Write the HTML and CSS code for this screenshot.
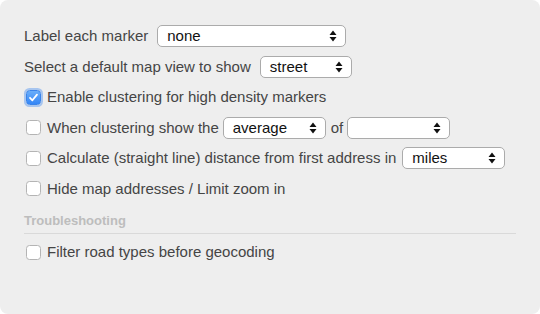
FILE: index.html
```html
<!DOCTYPE html>
<html>
<head>
<meta charset="utf-8">
<link rel="stylesheet" href="styles.css">
</head>
<body>
<div class="panel">
  <div class="row">
    <span class="label">Label each marker</span>
    <div class="select w189 ml9"><span>none</span><svg class="arr" width="8" height="12" viewBox="0 0 8 12"><path d="M4 0.5L7.5 5H0.5Z M4 11.5L7.5 7H0.5Z" fill="#111"/></svg></div>
  </div>
  <div class="row">
    <span class="label">Select a default map view to show</span>
    <div class="select w92 ml9"><span>street</span><svg class="arr" width="8" height="12" viewBox="0 0 8 12"><path d="M4 0.5L7.5 5H0.5Z M4 11.5L7.5 7H0.5Z" fill="#111"/></svg></div>
  </div>
  <div class="row">
    <span class="check on"><svg width="11" height="11" viewBox="0 0 11 11"><path d="M2 5.8L4.4 8.3L9 2.6" fill="none" stroke="#fff" stroke-width="1.8" stroke-linecap="round" stroke-linejoin="round"/></svg></span>
    <span class="label">Enable clustering for high density markers</span>
  </div>
  <div class="row">
    <span class="check"></span>
    <span class="label">When clustering show the</span>
    <div class="select w103 ml4"><span>average</span><svg class="arr" width="8" height="12" viewBox="0 0 8 12"><path d="M4 0.5L7.5 5H0.5Z M4 11.5L7.5 7H0.5Z" fill="#111"/></svg></div>
    <span class="label ml5">of</span>
    <div class="select w103 ml4"><span></span><svg class="arr" width="8" height="12" viewBox="0 0 8 12"><path d="M4 0.5L7.5 5H0.5Z M4 11.5L7.5 7H0.5Z" fill="#111"/></svg></div>
  </div>
  <div class="row">
    <span class="check"></span>
    <span class="label">Calculate (straight line) distance from first address in</span>
    <div class="select w103 ml6"><span>miles</span><svg class="arr" width="8" height="12" viewBox="0 0 8 12"><path d="M4 0.5L7.5 5H0.5Z M4 11.5L7.5 7H0.5Z" fill="#111"/></svg></div>
  </div>
  <div class="row">
    <span class="check"></span>
    <span class="label">Hide map addresses / Limit zoom in</span>
  </div>
  <div class="heading">Troubleshooting</div>
  <div class="row last">
    <span class="check"></span>
    <span class="label">Filter road types before geocoding</span>
  </div>
</div>
</body>
</html>
```
FILE: styles.css
```css
html, body {
  margin: 0;
  padding: 0;
  background: #ffffff;
}
.panel {
  width: 540px;
  height: 314px;
  box-sizing: border-box;
  background: #eeeeee;
  border-radius: 8px;
  padding: 20.7px 24px 0 24px;
  font-family: "Liberation Sans", Arial, sans-serif;
  font-size: 15px;
  color: #454545;
  display: flex;
  flex-direction: column;
}
.row {
  height: 30.6px;
  display: flex;
  align-items: center;
  flex-shrink: 0;
}
.label {
  white-space: nowrap;
  line-height: 18px;
}
.select {
  height: 22px;
  box-sizing: border-box;
  background: #ffffff;
  border: 1px solid #ababab;
  border-radius: 5px;
  display: flex;
  align-items: center;
  justify-content: space-between;
  padding: 0 8px 0 9px;
  color: #111111;
}
.select span {
  line-height: 18px;
}
.arr {
  display: block;
}
.w189 { width: 189px; }
.w92 { width: 92px; }
.w103 { width: 103px; }
.ml4 { margin-left: 4px; }
.ml5 { margin-left: 5px; }
.ml6 { margin-left: 6px; }
.ml9 { margin-left: 9px; }
.check {
  width: 15px;
  height: 15px;
  box-sizing: border-box;
  margin-left: 2px;
  margin-right: 6px;
  border: 1px solid #b4b4b4;
  border-radius: 3.5px;
  background: #ffffff;
  display: flex;
  align-items: center;
  justify-content: center;
  flex-shrink: 0;
}
.check.on {
  border: 1px solid #3a84ea;
  background: linear-gradient(#6aaefa, #3486f6);
  box-shadow: 0 0 0 2px rgba(95, 155, 240, 0.5);
}
.heading {
  margin-top: 8.5px;
  font-size: 13px;
  font-weight: bold;
  color: #bdbdbd;
  line-height: 16px;
  padding-bottom: 4px;
  border-bottom: 1px solid #d9d9d9;
  width: 492px;
}
.row.last {
  margin-top: 3px;
}
```
